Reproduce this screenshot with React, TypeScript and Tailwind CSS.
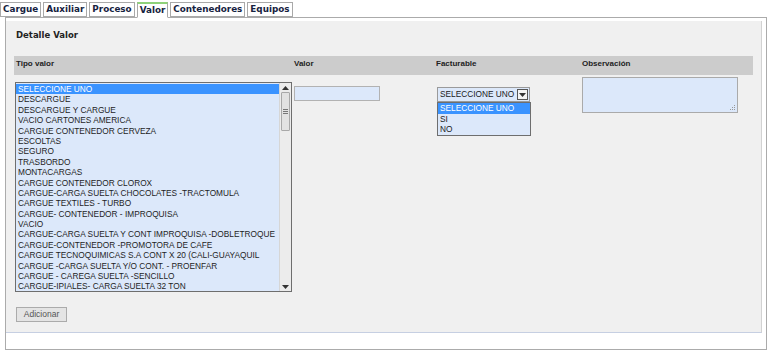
import React from "react";

const tabs = ["Cargue", "Auxiliar", "Proceso", "Valor", "Contenedores", "Equipos"];

const tipos = [
  "SELECCIONE UNO",
  "DESCARGUE",
  "DESCARGUE Y CARGUE",
  "VACIO CARTONES AMERICA",
  "CARGUE CONTENEDOR CERVEZA",
  "ESCOLTAS",
  "SEGURO",
  "TRASBORDO",
  "MONTACARGAS",
  "CARGUE CONTENEDOR CLOROX",
  "CARGUE-CARGA SUELTA CHOCOLATES -TRACTOMULA",
  "CARGUE TEXTILES - TURBO",
  "CARGUE- CONTENEDOR - IMPROQUISA",
  "VACIO",
  "CARGUE-CARGA SUELTA Y CONT IMPROQUISA -DOBLETROQUE",
  "CARGUE-CONTENEDOR -PROMOTORA DE CAFE",
  "CARGUE TECNOQUIMICAS S.A CONT X 20 (CALI-GUAYAQUIL",
  "CARGUE -CARGA SUELTA Y/O CONT. - PROENFAR",
  "CARGUE - CAREGA SUELTA -SENCILLO",
  "CARGUE-IPIALES- CARGA SUELTA 32 TON",
];

const Arrow = ({ up }: { up?: boolean }) => (
  <svg width="7" height="4" viewBox="0 0 7 4">
    <path d={up ? "M0 4 L3.5 0 L7 4 Z" : "M0 0 L7 0 L3.5 4 Z"} fill="#333" />
  </svg>
);

const App = () => {
  return (
    <div className="h-[352px] w-[768px] overflow-hidden bg-white font-['Liberation_Sans',Arial,sans-serif] text-[#1a1a1a]">
      {/* tabs */}
      <div className="flex h-[17px] items-end gap-[2px]">
        {tabs.map((t) => (
          <div
            key={t}
            className={
              t === "Valor"
                ? "relative z-10 -mb-px flex h-[16px] items-center border border-b-white border-[#a9a9a9] border-t-2 border-t-[#8fd27a] bg-white px-[2px] font-['DejaVu_Sans',Verdana,sans-serif] text-[8.8px] font-bold leading-none text-[#16233f]"
                : "flex h-[15px] items-center border border-[#a9a9a9] bg-white px-[2px] font-['DejaVu_Sans',Verdana,sans-serif] text-[8.8px] font-bold leading-none text-[#16233f]"
            }
          >
            {t}
          </div>
        ))}
      </div>

      {/* box */}
      <div className="ml-[5px] h-[333px] w-[762px] border border-[#ababab] bg-white">
        <div className="mt-[3px] h-[312px] w-[756px] border-b border-r border-b-[#c6cfe2] border-r-[#d2d2d2] bg-[#f0f0f0]">
          <div className="h-[35px] pl-[10px] pt-[9px] font-['DejaVu_Sans',Verdana,sans-serif] text-[8.5px] font-bold leading-[11px] text-[#222]">
            Detalle Valor
          </div>

          {/* header */}
          <div className="mx-[8px] grid h-[19px] grid-cols-[278px_142px_146px_1fr] bg-[#cccccc] pt-[3px] text-[8px] font-bold leading-[10px] text-[#222]">
            <div className="pl-[2px]">Tipo valor</div>
            <div className="pl-[2px]">Valor</div>
            <div className="pl-[2px]">Facturable</div>
            <div className="pl-[2px]">Observación</div>
          </div>

          {/* fields */}
          <div className="mx-[8px] grid grid-cols-[278px_142px_146px_1fr] text-[8.3px]">
            <div className="pl-[1px] pt-[7px]">
              <div className="flex h-[210px] w-[277px] overflow-hidden border border-[#6e6e6e] bg-[#dce8fa]">
                <div className="flex-1 pt-px">
                  {tipos.map((t, i) => (
                    <div
                      key={t}
                      className={
                        i === 0
                          ? "h-[10.4px] whitespace-nowrap bg-[#3a93ff] pl-[2px] leading-[10.4px] text-white"
                          : "h-[10.4px] whitespace-nowrap pl-[2px] leading-[10.4px] text-[#1e1e1e]"
                      }
                    >
                      {t}
                    </div>
                  ))}
                </div>
                {/* scrollbar */}
                <div className="flex w-[12px] flex-col items-center border-l border-[#d6d6d6] bg-[#ececec]">
                  <div className="flex h-[9px] items-center">
                    <Arrow up />
                  </div>
                  <div className="flex h-[39px] w-[9px] flex-col items-center justify-center gap-px rounded-[1px] border border-[#a8a8a8] bg-[#e2e2e2]">
                    <div className="h-px w-[5px] bg-[#777]" />
                    <div className="h-px w-[5px] bg-[#777]" />
                    <div className="h-px w-[5px] bg-[#777]" />
                  </div>
                  <div className="flex-1" />
                  <div className="flex h-[9px] items-center">
                    <Arrow />
                  </div>
                </div>
              </div>
              <button className="ml-[1px] mt-[15px] h-[15px] w-[51px] border border-[#ababab] bg-[#e4e4e4] text-[8.5px] leading-none text-[#555]">
                Adicionar
              </button>
            </div>

            <div className="pl-[2px] pt-[11px]">
              <div className="h-[15px] w-[86px] border border-[#b2b2b2] bg-[#dce8fa]" />
            </div>

            <div className="pl-[3px] pt-[12px]">
              <div className="flex h-[15px] w-[93px] items-center border border-[#9a9a9a] bg-[#dce8fa]">
                <span className="flex-1 whitespace-nowrap pl-[2px] leading-none">SELECCIONE UNO</span>
                <span className="mr-px flex h-[11px] w-[11px] items-center justify-center border border-[#555] bg-[#f4f4f4]">
                  <Arrow />
                </span>
              </div>
              <div className="w-[94px] border border-[#6e6e6e] bg-[#dce8fa]">
                <div className="h-[10.5px] bg-[#3a93ff] pl-[2px] leading-[10.5px] text-white">SELECCIONE UNO</div>
                <div className="h-[10.5px] pl-[2px] leading-[10.5px]">SI</div>
                <div className="h-[10.5px] pl-[2px] leading-[10.5px]">NO</div>
              </div>
            </div>

            <div className="pl-[2px] pt-[2px]">
              <div className="relative h-[36px] w-[156px] border border-[#aaaaaa] bg-[#dce8fa]">
                <svg className="absolute bottom-[1px] right-[1px]" width="6" height="6" viewBox="0 0 6 6">
                  <rect x="4" y="0" width="1" height="1" fill="#999" />
                  <rect x="2" y="2" width="1" height="1" fill="#999" />
                  <rect x="4" y="2" width="1" height="1" fill="#999" />
                  <rect x="0" y="4" width="1" height="1" fill="#999" />
                  <rect x="2" y="4" width="1" height="1" fill="#999" />
                  <rect x="4" y="4" width="1" height="1" fill="#999" />
                </svg>
              </div>
            </div>
          </div>
        </div>
      </div>
    </div>
  );
};

export default App;
